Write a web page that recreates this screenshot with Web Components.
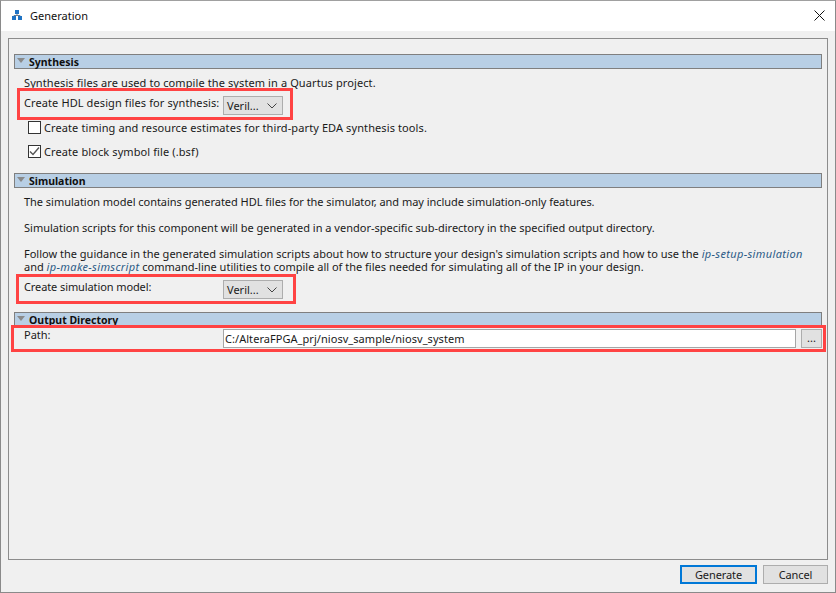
<!DOCTYPE html>
<html>
<head>
<meta charset="utf-8">
<title>Generation</title>
<style>
  html, body { margin: 0; padding: 0; background: #fff; }
  body { font: 11px "Noto Sans", "Liberation Sans", sans-serif; color: #1a1a1a; }
  i { color: #2b5b86; letter-spacing: .35px; }
</style>
</head>
<body>
<gen-window caption="Generation">
  <gen-section heading="Synthesis" style="height:119px;letter-spacing:.1px">
    <gen-text style="height:23px">Synthesis files are used to compile the system in a Quartus project.</gen-text>
    <gen-row label="Create HDL design files for synthesis:"><gen-combo value="Veril..."></gen-combo></gen-row>
    <gen-check label="Create timing and resource estimates for third-party EDA synthesis tools."></gen-check>
    <gen-check checked label="Create block symbol file (.bsf)"></gen-check>
  </gen-section>
  <gen-section heading="Simulation" style="height:139px">
    <gen-text style="height:26px;letter-spacing:-.03px">The simulation model contains generated HDL files for the simulator, and may include simulation-only features.</gen-text>
    <gen-text style="height:26px">Simulation scripts for this component will be generated in a vendor-specific sub-directory in the specified output directory.</gen-text>
    <gen-text style="height:29px">Follow the guidance in the generated simulation scripts about how to structure your design's simulation scripts and how to use the <i>ip-setup-simulation</i><br>and <i>ip-make-simscript</i> command-line utilities to compile all of the files needed for simulating all of the IP in your design.</gen-text>
    <gen-row label="Create simulation model:" style="margin-top:7px;letter-spacing:-.1px"><gen-combo value="Veril..."></gen-combo></gen-row>
  </gen-section>
  <gen-section heading="Output Directory">
    <gen-path label="Path:" value="C:/AlteraFPGA_prj/niosv_sample/niosv_system"></gen-path>
  </gen-section>
  <gen-button slot="actions" primary style="width:77px">Generate</gen-button>
  <gen-button slot="actions" style="width:65px">Cancel</gen-button>
  <gen-mark slot="marks" style="left:16px;top:87px;width:276px;height:32px"></gen-mark>
  <gen-mark slot="marks" style="left:15px;top:273px;width:280px;height:30px"></gen-mark>
  <gen-mark slot="marks" style="left:10px;top:324px;width:815px;height:27px"></gen-mark>
</gen-window>

<script>
const html = String.raw;

class GenElement extends HTMLElement {
    constructor() {
        super();
        this.attachShadow({ mode: 'open' });
    }

    connectedCallback() {
        this.shadowRoot.innerHTML = this.render();
    }
}

class GenWindow extends GenElement {
    render() {
        return html`
            <style>
                :host {
                    display: flex;
                    flex-direction: column;
                    position: relative;
                    box-sizing: border-box;
                    width: 836px;
                    height: 593px;
                    background: #f0f0f0;
                    border: 1px solid #8a8a8a;
                    border-top-color: #a0a0a0;
                    overflow: hidden;
                }
                .Title {
                    display: flex;
                    align-items: center;
                    box-sizing: border-box;
                    height: 30px;
                    flex: none;
                    padding: 0 0 2px 11px;
                    background: #fff;
                    color: #111;
                    font-size: 11px;
                }
                .Title svg { margin-right: 8px; }
                .Close { margin-left: auto; margin-right: 10px; }
                .Close svg { display: block; margin: 0; }
                .Panel {
                    flex: none;
                    box-sizing: border-box;
                    height: 522px;
                    margin: 7px 7px 0;
                    padding: 15px 5px 0;
                    background: #f0f0f0;
                    border: 1px solid #8c8c8c;
                }
                .Actions {
                    display: flex;
                    justify-content: flex-end;
                    gap: 6px;
                    margin: 5px 7px 0;
                }
            </style>
            <div class="Title">
                <svg width="10" height="10" viewBox="0 0 10 10">
                    <path fill="#1f73c4" d="M3 0h4v4H3zM0 6h4v4H0zM6 6h4v4H6z"/>
                    <path fill="none" stroke="#6a7b8c" d="M5 4v1.500M2 6V5.500h6V6"/>
                </svg>
                ${this.getAttribute('caption')}
                <span class="Close">
                    <svg width="11" height="11" viewBox="0 0 11 11"><path fill="none" stroke="#111" d="M.5.5l10 10M10.500.5l-10 10"/></svg>
                </span>
            </div>
            <div class="Panel"><slot></slot></div>
            <div class="Actions"><slot name="actions"></slot></div>
            <slot name="marks"></slot>
        `;
    }
}

class GenSection extends GenElement {
    render() {
        return html`
            <style>
                :host { display: block; }
                .Head {
                    display: flex;
                    align-items: center;
                    box-sizing: border-box;
                    height: 15px;
                    background: #b8cfe5;
                    border: 1px solid #7f7f7f;
                    font-weight: 700;
                    font-size: 10.5px;
                    letter-spacing: 0;
                    color: #101010;
                }
                .Head svg { margin: 0 4px 3px 2px; }
                .Body { padding-left: 10px; padding-top: 4px; }
            </style>
            <div class="Head">
                <svg width="8" height="5" viewBox="0 0 8 5"><path fill="#8a8a8a" d="M0 0h8L4 5z"/></svg>
                ${this.getAttribute('heading')}
            </div>
            <div class="Body"><slot></slot></div>
        `;
    }
}

class GenText extends GenElement {
    render() {
        return html`
            <style>
                :host { display: block; line-height: 13px; white-space: nowrap; padding-top: 3px; box-sizing: border-box; }
            </style>
            <slot></slot>
        `;
    }
}

class GenRow extends GenElement {
    render() {
        return html`
            <style>
                :host { display: grid; grid-template-columns: 199px auto; align-items: start; height: 19px; line-height: 13px; white-space: nowrap; }
            </style>
            <div>${this.getAttribute('label')}</div>
            <slot></slot>
        `;
    }
}

class GenCombo extends GenElement {
    render() {
        return html`
            <style>
                :host {
                    display: flex;
                    align-items: center;
                    justify-content: space-between;
                    box-sizing: border-box;
                    width: 60px;
                    height: 19px;
                    padding: 0 5px 0 3px;
                    background: #e1e1e1;
                    border: 1px solid #adadad;
                    letter-spacing: 0;
                }
            </style>
            <span>${this.getAttribute('value')}</span>
            <svg width="10" height="6" viewBox="0 0 10 6"><path fill="none" stroke="#444" d="M.5.5L5 5 9.500.5"/></svg>
        `;
    }
}

class GenCheck extends GenElement {
    render() {
        const tick = this.hasAttribute('checked')
            ? '<path fill="none" stroke="#555" stroke-width="1.4" d="M2 6.500l3 3 6-7"/>'
            : '';
        return html`
            <style>
                :host { display: flex; align-items: center; height: 24px; padding-left: 4px; white-space: nowrap; }
                svg { margin-right: 3px; flex: none; }
            </style>
            <svg width="13" height="13" viewBox="0 0 13 13">
                <rect x=".5" y=".5" width="12" height="12" fill="#fff" stroke="#333"/>${tick}
            </svg>
            ${this.getAttribute('label')}
        `;
    }
}

class GenPath extends GenElement {
    render() {
        return html`
            <style>
                :host { display: grid; grid-template-columns: 199px 1fr 21px; align-items: start; margin-top: -2px; line-height: 12px; }
                .Input {
                    box-sizing: border-box;
                    height: 19px;
                    line-height: 17px;
                    padding-left: 1px;
                    background: #fff;
                    border: 1px solid #a6a6a6;
                    margin-right: 5px;
                    letter-spacing: .05px;
                }
                .More {
                    box-sizing: border-box;
                    height: 19px;
                    line-height: 16px;
                    text-align: center;
                    background: #e1e1e1;
                    border: 1px solid #adadad;
                }
            </style>
            <div>${this.getAttribute('label')}</div>
            <div class="Input">${this.getAttribute('value')}</div>
            <div class="More">...</div>
        `;
    }
}

class GenButton extends GenElement {
    render() {
        const edge = this.hasAttribute('primary') ? '2px solid #0078d7' : '1px solid #adadad';
        return html`
            <style>
                :host {
                    display: flex;
                    align-items: center;
                    justify-content: center;
                    box-sizing: border-box;
                    height: 19px;
                    background: #e1e1e1;
                    border: ${edge};
                    letter-spacing: -.1px;
                }
            </style>
            <slot></slot>
        `;
    }
}

class GenMark extends GenElement {
    render() {
        return html`
            <style>
                :host { display: block; position: absolute; box-sizing: border-box; border: 3px solid #ff4343; }
            </style>
        `;
    }
}

customElements.define('gen-window', GenWindow);
customElements.define('gen-section', GenSection);
customElements.define('gen-text', GenText);
customElements.define('gen-row', GenRow);
customElements.define('gen-combo', GenCombo);
customElements.define('gen-check', GenCheck);
customElements.define('gen-path', GenPath);
customElements.define('gen-button', GenButton);
customElements.define('gen-mark', GenMark);
</script>
</body>
</html>
